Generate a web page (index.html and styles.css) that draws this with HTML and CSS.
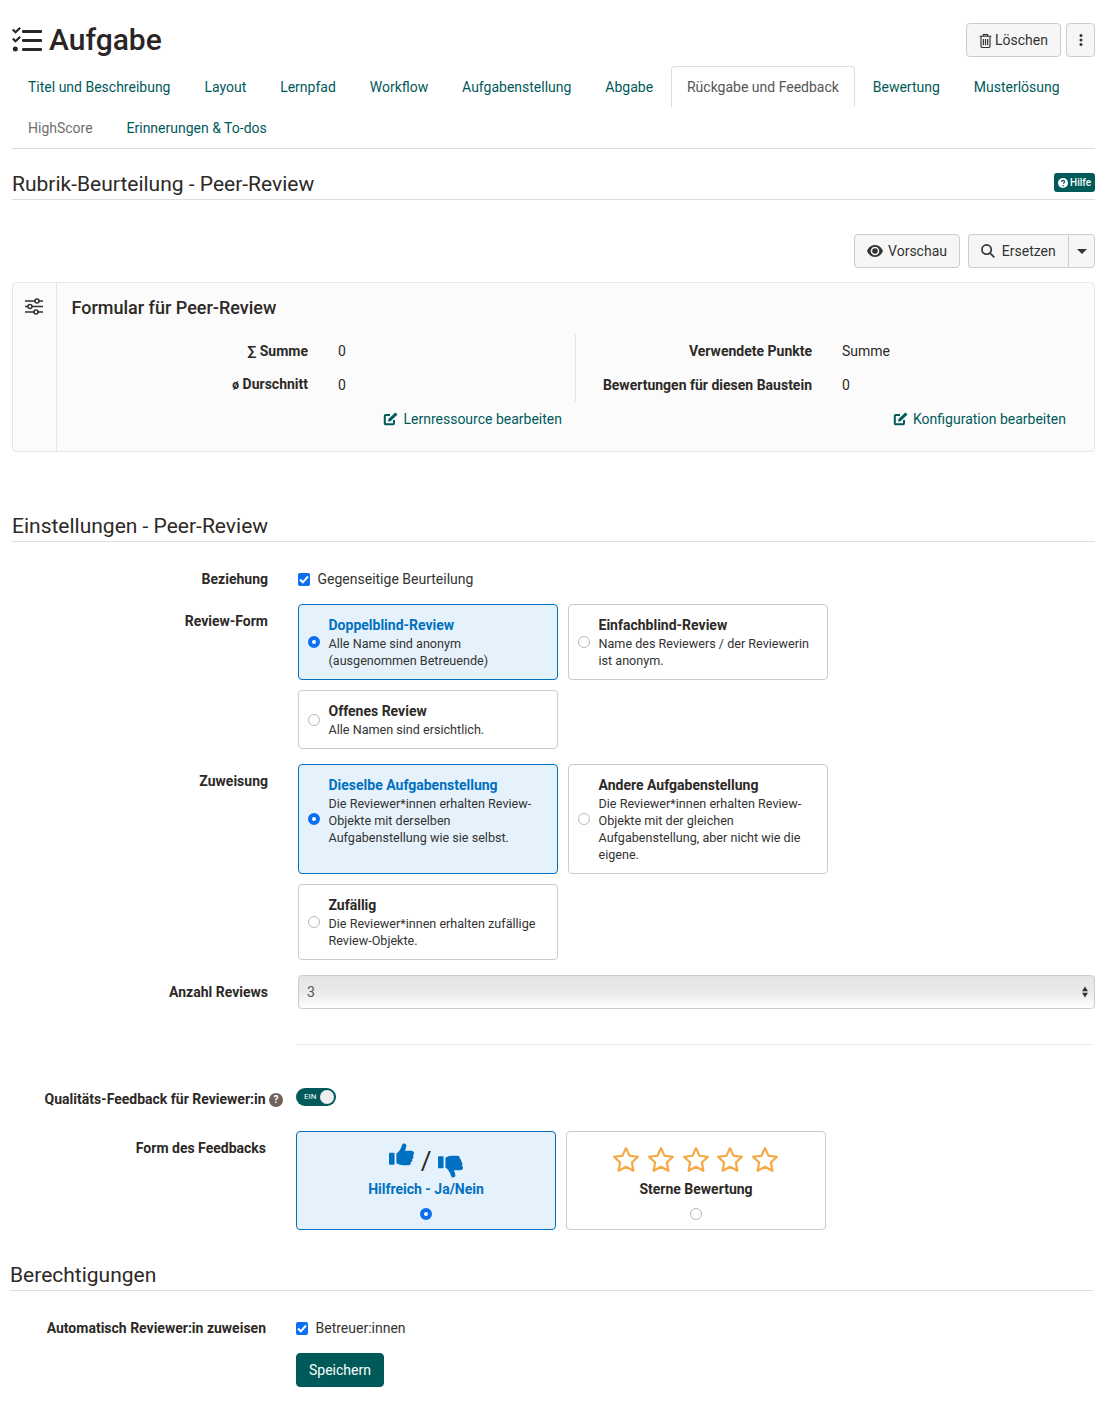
FILE: index.html
```html
<!DOCTYPE html>
<html lang="de">
<head>
<meta charset="utf-8">
<title>Aufgabe</title>
<link rel="stylesheet" href="styles.css">
</head>
<body>
<header class="top">
  <h1 class="title">
    <svg class="title-icon" width="30" height="26" viewBox="0 0 30 26"><g fill="none" stroke="#2b2623" stroke-width="2.200"><path d="M.8 2.500l2.700 2.700L8.200.8"/><path d="M.8 11.500l2.700 2.700 4.700-4.400"/></g><circle cx="3.300" cy="22" r="2.500" fill="#2b2623"/><g fill="#2b2623"><rect x="10" y="3" width="20" height="3" rx="1"/><rect x="10" y="12" width="20" height="3" rx="1"/><rect x="10" y="21" width="20" height="3" rx="1"/></g></svg>
    Aufgabe
  </h1>
  <div class="top-actions">
    <button class="btn btn-del"><svg width="13" height="15" viewBox="0 0 12 14" fill="none" stroke="#333" stroke-width="1.100"><path d="M.5 3h11M4 3V1.500h4V3M1.800 3v9.200c0 .7.500 1.300 1.200 1.300h6c.7 0 1.200-.6 1.200-1.300V3M4 5.500v6M6 5.500v6M8 5.500v6"/></svg>Löschen</button>
    <button class="btn btn-more"><svg width="4" height="12" viewBox="0 0 4 12" fill="#333"><circle cx="2" cy="1.500" r="1.500"/><circle cx="2" cy="6" r="1.500"/><circle cx="2" cy="10.500" r="1.500"/></svg></button>
  </div>
</header>

<nav class="tabs">
  <a class="tab">Titel und Beschreibung</a>
  <a class="tab">Layout</a>
  <a class="tab">Lernpfad</a>
  <a class="tab">Workflow</a>
  <a class="tab">Aufgabenstellung</a>
  <a class="tab">Abgabe</a>
  <a class="tab tab-active">Rückgabe und Feedback</a>
  <a class="tab">Bewertung</a>
  <a class="tab">Musterlösung</a>
  <a class="tab tab-muted">HighScore</a>
  <a class="tab">Erinnerungen &amp; To-dos</a>
</nav>

<div class="section-head first">
  <h2>Rubrik-Beurteilung - Peer-Review</h2>
  <span class="help"><svg width="10" height="10" viewBox="0 0 10 10"><circle cx="5" cy="5" r="5" fill="#fff"/><path d="M3.500 3.900c0-1 .7-1.600 1.600-1.600s1.500.6 1.500 1.300c0 1.100-1.200 1.100-1.200 2.200" fill="none" stroke="#005a5a" stroke-width="1.200"/><circle cx="5.200" cy="7.700" r=".8" fill="#005a5a"/></svg>Hilfe</span>
</div>

<div class="form-actions">
  <button class="btn"><svg width="16" height="12" viewBox="0 0 16 12"><path d="M8 0C4.500 0 1.500 2.300 0 6c1.500 3.700 4.500 6 8 6s6.500-2.300 8-6c-1.500-3.700-4.500-6-8-6zm0 10.300a4.300 4.300 0 1 1 0-8.600 4.300 4.300 0 0 1 0 8.600z" fill="#333"/><circle cx="8" cy="6" r="2.800" fill="#333"/></svg>Vorschau</button>
  <div class="btn-group">
    <button class="btn btn-split"><svg width="14" height="14" viewBox="0 0 15 15" fill="none" stroke="#333" stroke-width="1.800"><circle cx="6" cy="6" r="5"/><path d="M9.700 9.700l4.600 4.600"/></svg>Ersetzen</button>
    <button class="btn btn-caret"><span class="caret"></span></button>
  </div>
</div>

<section class="panel">
  <div class="panel-side">
    <svg width="20" height="17" viewBox="0 0 20 17" fill="none" stroke="#333" stroke-width="1.600"><path d="M1 3h10M15 3h4M1 8.500h3M8 8.500h11M1 14h9M14 14h5"/><circle cx="13" cy="3" r="2"/><circle cx="6" cy="8.500" r="2"/><circle cx="12" cy="14" r="2"/></svg>
  </div>
  <div class="panel-main">
    <h3>Formular für Peer-Review</h3>
    <div class="stats">
      <div class="stats-col stats-left">
        <dl class="stat"><dt>∑ Summe</dt><dd>0</dd></dl>
        <dl class="stat"><dt><span class="sym">ø</span> Durschnitt</dt><dd>0</dd></dl>
      </div>
      <div class="stats-col stats-right">
        <dl class="stat"><dt>Verwendete Punkte</dt><dd>Summe</dd></dl>
        <dl class="stat"><dt>Bewertungen für diesen Baustein</dt><dd>0</dd></dl>
      </div>
    </div>
    <div class="panel-links">
      <a class="edit edit-left"><svg width="15" height="14" viewBox="0 0 15 14"><path d="M11 8v3.300c0 .5-.4.900-.9.900H2.700a.9.900 0 0 1-.9-.9V3.900c0-.5.400-.9.900-.9H7" fill="none" stroke="#005a5a" stroke-width="2"/><path d="M5.500 7L12.300.6l2.200 2-6.700 6.500-2.600.6z" fill="#005a5a"/></svg>Lernressource bearbeiten</a>
      <a class="edit edit-right"><svg width="15" height="14" viewBox="0 0 15 14"><path d="M11 8v3.300c0 .5-.4.900-.9.900H2.700a.9.900 0 0 1-.9-.9V3.900c0-.5.400-.9.900-.9H7" fill="none" stroke="#005a5a" stroke-width="2"/><path d="M5.500 7L12.300.6l2.200 2-6.700 6.500-2.600.6z" fill="#005a5a"/></svg>Konfiguration bearbeiten</a>
    </div>
  </div>
</section>

<div class="section-head settings-head"><h2>Einstellungen - Peer-Review</h2></div>

<div class="form">
  <div class="row row-rel">
    <div class="label">Beziehung</div>
    <label class="check"><span class="box"><svg width="10" height="9" viewBox="0 0 10 9" fill="none" stroke="#fff" stroke-width="2"><path d="M1 4.500l2.800 2.800L9 1.500"/></svg></span>Gegenseitige Beurteilung</label>
  </div>

  <div class="row row-form">
    <div class="label">Review-Form</div>
    <div class="cards">
      <div class="card on h76"><span class="radio on"></span><div><strong>Doppelblind-Review</strong><p>Alle Name sind anonym<br>(ausgenommen Betreuende)</p></div></div>
      <div class="card h76"><span class="radio"></span><div><strong>Einfachblind-Review</strong><p>Name des Reviewers / der Reviewerin<br>ist anonym.</p></div></div>
      <div class="card h59"><span class="radio"></span><div><strong>Offenes Review</strong><p>Alle Namen sind ersichtlich.</p></div></div>
    </div>
  </div>

  <div class="row row-assign">
    <div class="label">Zuweisung</div>
    <div class="cards">
      <div class="card on h110"><span class="radio on"></span><div><strong>Dieselbe Aufgabenstellung</strong><p>Die Reviewer*innen erhalten Review-<br>Objekte mit derselben<br>Aufgabenstellung wie sie selbst.</p></div></div>
      <div class="card h110"><span class="radio"></span><div><strong>Andere Aufgabenstellung</strong><p>Die Reviewer*innen erhalten Review-<br>Objekte mit der gleichen<br>Aufgabenstellung, aber nicht wie die<br>eigene.</p></div></div>
      <div class="card h76"><span class="radio"></span><div><strong>Zufällig</strong><p>Die Reviewer*innen erhalten zufällige<br>Review-Objekte.</p></div></div>
    </div>
  </div>

  <div class="row row-count">
    <div class="label">Anzahl Reviews</div>
    <div class="select"><span>3</span><svg width="6" height="12" viewBox="0 0 7 13" fill="#333"><path d="M3.500 0L7 5.500H0zM3.500 13L0 7.500h7z"/></svg></div>
  </div>
</div>

<hr class="divider">

<div class="form form-b">
  <div class="row row-quality">
    <div class="label">Qualitäts-Feedback für Reviewer:in <span class="q">?</span></div>
    <div class="toggle"><span>EIN</span><i></i></div>
  </div>
  <div class="row row-fb">
    <div class="label">Form des Feedbacks</div>
    <div class="fb-cards">
      <div class="fb on">
        <div class="fb-icons">
          <svg class="thumb" width="25" height="23" viewBox="0 0 27 24" fill="#0070c0"><rect x="0" y="10" width="6" height="13" rx="1"/><path d="M8 11c3-2 5-5 6-9 .3-1.300 1.200-2 2.300-2 1.700 0 2.700 1.500 2.400 3.300-.2 1.400-.8 3-1.500 4.700H24c1.700 0 3 1.200 3 2.700 0 1-.5 1.700-1.200 2.200.4.500.6 1.100.6 1.800 0 1-.6 1.900-1.500 2.300.2.400.3.800.3 1.200 0 1-.7 1.900-1.700 2.200.1.300.1.500.1.700 0 1.500-1.200 2.400-2.800 2.400h-5.600c-3 0-5-1-7.200-2z"/></svg>
          <span class="slash">/</span>
          <svg class="thumb thumb-down" width="25" height="23" viewBox="0 0 27 24" fill="#0070c0"><g transform="translate(0 24) scale(1 -1)"><rect x="0" y="10" width="6" height="13" rx="1"/><path d="M8 11c3-2 5-5 6-9 .3-1.300 1.200-2 2.300-2 1.700 0 2.700 1.500 2.400 3.300-.2 1.400-.8 3-1.500 4.700H24c1.700 0 3 1.200 3 2.700 0 1-.5 1.700-1.200 2.200.4.500.6 1.100.6 1.800 0 1-.6 1.900-1.500 2.300.2.400.3.800.3 1.200 0 1-.7 1.900-1.700 2.200.1.300.1.500.1.700 0 1.500-1.200 2.400-2.800 2.400h-5.600c-3 0-5-1-7.200-2z"/></g></svg>
        </div>
        <strong>Hilfreich - Ja/Nein</strong>
        <span class="radio on"></span>
      </div>
      <div class="fb">
        <div class="fb-icons stars">
          <svg width="26" height="25" viewBox="1 1 24 23"><path class="star" d="M13 2l3.300 7 7.700 1-5.600 5.300 1.400 7.600-6.800-3.700-6.800 3.700 1.400-7.600L2 10l7.700-1z"/></svg>
          <svg width="26" height="25" viewBox="1 1 24 23"><path class="star" d="M13 2l3.300 7 7.700 1-5.600 5.300 1.400 7.600-6.800-3.700-6.800 3.700 1.400-7.600L2 10l7.700-1z"/></svg>
          <svg width="26" height="25" viewBox="1 1 24 23"><path class="star" d="M13 2l3.300 7 7.700 1-5.600 5.300 1.400 7.600-6.800-3.700-6.800 3.700 1.400-7.600L2 10l7.700-1z"/></svg>
          <svg width="26" height="25" viewBox="1 1 24 23"><path class="star" d="M13 2l3.300 7 7.700 1-5.600 5.300 1.400 7.600-6.800-3.700-6.800 3.700 1.400-7.600L2 10l7.700-1z"/></svg>
          <svg width="26" height="25" viewBox="1 1 24 23"><path class="star" d="M13 2l3.300 7 7.700 1-5.600 5.300 1.400 7.600-6.800-3.700-6.800 3.700 1.400-7.600L2 10l7.700-1z"/></svg>
        </div>
        <strong>Sterne Bewertung</strong>
        <span class="radio"></span>
      </div>
    </div>
  </div>

  <div class="section-head perm-head"><h2>Berechtigungen</h2></div>

  <div class="row row-auto">
    <div class="label">Automatisch Reviewer:in zuweisen</div>
    <label class="check"><span class="box"><svg width="10" height="9" viewBox="0 0 10 9" fill="none" stroke="#fff" stroke-width="2"><path d="M1 4.500l2.800 2.800L9 1.500"/></svg></span>Betreuer:innen</label>
  </div>
  <div class="row row-save">
    <div class="label"></div>
    <button class="save">Speichern</button>
  </div>
</div>
</body>
</html>
```

FILE: styles.css
```css
* { box-sizing: border-box; }
html, body { margin: 0; padding: 0; }
body {
  width: 1107px;
  height: 1408px;
  overflow: hidden;
  padding: 0 12px;
  background: #fff;
  color: #2d2926;
  font-family: Roboto, "Liberation Sans", sans-serif;
  font-size: 14px;
  line-height: 17px;
}
h1, h2, h3, p, dl, dd { margin: 0; }

.top { display: flex; justify-content: space-between; height: 66px; padding-top: 23px; }
.title { display: flex; align-items: center; gap: 7px; height: 34px; font-size: 30px; font-weight: 500; line-height: 34px; color: #2b2623; }
.top-actions { display: flex; gap: 5px; }

.btn {
  display: inline-flex;
  align-items: center;
  justify-content: center;
  gap: 5px;
  height: 34px;
  padding: 0 12px;
  background: #f6f6f6;
  border: 1px solid #ccc;
  border-radius: 4px;
  color: #333;
  font: 14px Roboto, sans-serif;
}
.btn-del { gap: 3px; width: 95px; padding: 0; }
.btn-more { width: 29px; padding: 0; }

.tabs { display: flex; flex-wrap: wrap; align-content: flex-start; height: 83px; border-bottom: 1px solid #ddd; }
.tab { display: block; height: 41px; padding: 13px 16px 0; margin-right: 1.900px; color: #005a5a; white-space: nowrap; }
.tab-active { color: #555; background: #fff; border: 1px solid #ddd; border-bottom: 0; border-radius: 4px 4px 0 0; padding: 12px 15px 0; }
.tab-muted { color: #6f6f6f; }

.section-head { display: flex; justify-content: space-between; align-items: flex-end; border-bottom: 1px solid #ddd; }
.section-head h2 { font-size: 21px; font-weight: 400; line-height: 26px; color: #2d2926; }
.first { height: 51px; padding-bottom: 2px; }
.help { display: inline-flex; align-items: center; gap: 2px; height: 19px; padding: 0 4px; margin-bottom: 5px; background: #005a5a; color: #fff; border-radius: 3px; font-size: 10px; font-weight: 500; }

.form-actions { display: flex; justify-content: flex-end; gap: 8px; margin-top: 34px; }
.btn-group { display: flex; }
.btn-split { width: 100px; gap: 6.500px; border-radius: 4px 0 0 4px; border-right: 0; padding: 0; }
.btn-caret { width: 27px; padding: 0; border-radius: 0 4px 4px 0; }
.caret { width: 0; height: 0; border-left: 5px solid transparent; border-right: 5px solid transparent; border-top: 5px solid #333; }

.panel { display: flex; height: 170px; margin-top: 14px; background: #fbfbfb; border: 1px solid #e7e7e7; border-radius: 4px; }
.panel-side { display: flex; justify-content: center; width: 44px; padding: 15px 2px 0 0; border-right: 1px solid #e7e7e7; flex: none; }
.panel-main { flex: 1; padding: 13px 0 0 14.500px; }
.panel-main h3 { font-size: 18px; font-weight: 500; line-height: 24px; color: #2d2926; }
.stats { display: flex; margin-top: 14px; height: 68px; }
.stats-col { display: flex; flex-direction: column; }
.stats-left { width: 504.500px; border-right: 1px solid #e4e4e4; }
.stat { display: flex; align-items: center; height: 34px; }
.stat dt { font-weight: 700; text-align: right; color: #2d2926; }
.stat dd { margin-left: 30px; }
.stats-left dt { width: 236.500px; }
.stats-right dt { width: 236px; }
.sym { font-size: 12px; }
.panel-links { display: flex; height: 34px; }
.edit { display: flex; align-items: center; gap: 5px; color: #005a5a; }
.edit-left { width: 490.500px; justify-content: flex-end; }
.edit-right { width: 504px; justify-content: flex-end; }

.settings-head { height: 30px; margin-top: 60px; padding-bottom: 2px; }

.form { display: block; }
.row { display: flex; }
.label { width: 256px; flex: none; text-align: right; font-weight: 700; color: #2d2926; }
.row-rel { margin-top: 29px; align-items: center; height: 17px; }
.row-form { margin-top: 16px; }
.row-form .label, .row-assign .label { padding-top: 9px; }
.row-assign { margin-top: 15px; }
.check { display: flex; align-items: center; gap: 7.500px; margin-left: 30px; color: #333; }
.box { display: flex; align-items: center; justify-content: center; width: 12px; height: 13px; border-radius: 2px; background: #0b6ff0; }

.cards { display: grid; grid-template-columns: 260px 260px; gap: 10px; margin-left: 30px; align-items: start; }
.card { display: flex; align-items: center; gap: 8.500px; padding: 0 9px; border: 1px solid #ccc; border-radius: 4px; background: #fff; font-size: 12.600px; line-height: 17px; color: #333; }
.card strong { display: block; font-size: 14px; line-height: 19px; font-weight: 700; color: #2d2926; }
.card.on { background: #e6f2fb; border-color: #0070c0; }
.card.on strong { color: #0070c0; }
.h76 { height: 76px; }
.h59 { height: 59px; }
.h110 { height: 110px; }
.h110 > div { align-self: flex-start; padding-top: 11px; }
.radio { display: inline-block; flex: none; width: 12px; height: 12px; border: 1px solid #bbb; border-radius: 50%; background: #fff; }
.radio.on { border: 4px solid #0b6ff0; }

.row-count { margin-top: 15px; align-items: center; height: 34px; }
.select { display: flex; align-items: center; justify-content: space-between; width: 797px; height: 34px; margin-left: 30px; padding: 0 6px 0 8px; border: 1px solid #ccc; border-radius: 4px; background: linear-gradient(#e4e4e4 0, #ebebeb 55%, #fff 100%); color: #555; }

.divider { width: 797px; height: 1px; margin: 35px 0 0 284px; border: 0; background: #e7e7e7; }

.form-b { margin-left: -2px; }
.row-quality { margin-top: 44px; height: 17px; align-items: center; }
.row-quality .label { margin-top: 4px; }
.q { display: inline-block; width: 14px; height: 14px; margin: 0 -17px 0 0; border-radius: 50%; background: #6e625a; color: #fff; font-size: 10px; line-height: 14px; text-align: center; vertical-align: 1px; }
.toggle { display: flex; align-items: center; justify-content: space-between; width: 40px; height: 18px; margin: -2px 0 0 30px; padding: 0 2px 0 8px; border-radius: 9px; background: #005a5a; }
.toggle span { color: #fff; font-size: 8px; }
.toggle i { width: 14px; height: 14px; border-radius: 50%; background: #eee; }

.row-fb { margin-top: 25px; }
.row-fb .label { padding-top: 9px; }
.fb-cards { display: flex; gap: 10px; margin-left: 30px; }
.fb { display: flex; flex-direction: column; align-items: center; width: 260px; height: 99px; border: 1px solid #ccc; border-radius: 4px; background: #fff; }
.fb.on { background: #e6f2fb; border-color: #0070c0; }
.fb strong { display: block; line-height: 17px; font-weight: 700; color: #2d2926; }
.fb.on strong { color: #0070c0; }
.fb .radio { margin-top: 10px; }
.fb-icons { display: flex; align-items: flex-start; justify-content: center; height: 41px; margin-top: 8px; }
.fb.on .fb-icons { gap: 7px; margin-top: 11px; height: 38px; }
.thumb-down { margin-top: 12px; }
.slash { font-size: 26px; line-height: 36px; color: #2d2926; font-weight: 400; }
.stars { gap: 8.800px; margin-top: 15px; height: 34px; padding-right: 1px; }
.star { fill: none; stroke: #f5a742; stroke-width: 2; stroke-linejoin: round; }

.perm-head { height: 32px; margin-top: 29px; padding-bottom: 2px; width: 1083px; }
.row-auto { margin-top: 29px; height: 17px; align-items: center; }
.row-save { margin-top: 16px; }
.save { width: 88px; height: 34px; margin-left: 30px; border: 1px solid #005a5a; border-radius: 4px; background: #005a5a; color: #fff; font: 14px Roboto, sans-serif; }
```
